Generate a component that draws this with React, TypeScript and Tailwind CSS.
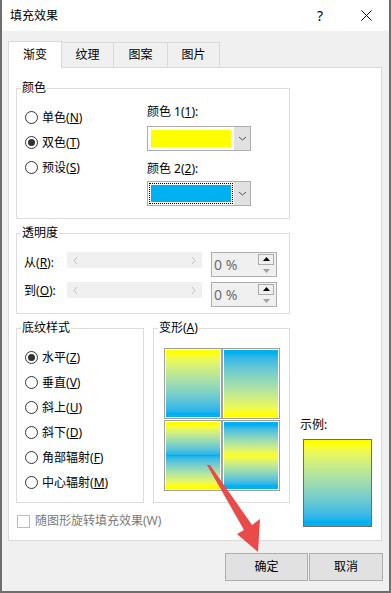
import React from "react";

const YELLOW = "#ffff00";
const BLUE = "#00b0f0";

function Radio({ label, hotkey, checked }: { label: string; hotkey: string; checked?: boolean }) {
  return (
    <div className="flex h-[25px] items-center gap-[4px]">
      <span className="flex h-[13px] w-[13px] items-center justify-center rounded-full border border-[#333333] bg-white">
        {checked && <span className="h-[7px] w-[7px] rounded-full bg-[#333333]" />}
      </span>
      <span>
        {label}(<u>{hotkey}</u>)
      </span>
    </div>
  );
}

function Group({ label, className, children }: { label: React.ReactNode; className: string; children?: React.ReactNode }) {
  return (
    <div className={"relative border border-[#dcdcdc] " + className}>
      <span className="absolute -top-[9px] left-[4px] bg-white px-[1px] leading-[16px]">{label}</span>
      {children}
    </div>
  );
}

function Chevron({ dir, color }: { dir: "down" | "left" | "right" | "up"; color: string }) {
  const d = {
    down: "M1 1 L4.5 4 L8 1",
    up: "M1 4 L4.5 1 L8 4",
    left: "M4 1 L1 4.5 L4 8",
    right: "M1 1 L4 4.5 L1 8",
  }[dir];
  const flat = dir === "down" || dir === "up";
  return (
    <svg viewBox={flat ? "0 0 9 5" : "0 0 5 9"} width={flat ? 9 : 5} height={flat ? 5 : 9}>
      <path d={d} fill="none" stroke={color} strokeWidth="1" />
    </svg>
  );
}

function Combo({ color, focused }: { color: string; focused?: boolean }) {
  return (
    <div className="flex h-[25px] w-[104px] border border-[#adadad] bg-white">
      <div className="flex-1 p-[1px]">
        <div className={"h-full w-full p-[1px] " + (focused ? "border border-dotted border-black" : "border border-transparent")}>
          <div className="h-full w-full" style={{ background: color }} />
        </div>
      </div>
      <div className="flex w-[16px] items-center justify-center bg-[#e1e1e1]">
        <Chevron dir="down" color="#555555" />
      </div>
    </div>
  );
}

function SliderRow({ label, hotkey, labelTop }: { label: string; hotkey: string; labelTop: string }) {
  return (
    <div className="flex h-[25px] items-start">
      <span className={"w-[43px] leading-[16px] " + labelTop}>
        {label}(<u>{hotkey}</u>):
      </span>
      <div className="flex h-[16px] w-[135px] items-center justify-between bg-[#f0f0f0] px-[6px]">
        <Chevron dir="left" color="#c2c2c2" />
        <Chevron dir="right" color="#c2c2c2" />
      </div>
      <div className="ml-[9px] flex h-[25px] w-[66px] items-center border border-[#adadad] bg-[#f0f0f0] pr-[2px]">
        <span className="flex-1 pl-[2px] text-[14px] text-[#6d6d6d]">0 %</span>
        <div className="flex flex-col gap-[1px]">
          <div className="flex h-[11px] w-[16px] items-center justify-center border border-[#adadad] bg-[#f0f0f0]">
            <svg width="7" height="4" viewBox="0 0 7 4"><path d="M0 4 L3.5 0 L7 4 Z" fill="#000" /></svg>
          </div>
          <div className="flex h-[10px] w-[16px] items-center justify-center bg-[#f0f0f0]">
            <svg width="7" height="4" viewBox="0 0 7 4"><path d="M0 0 L3.5 4 L7 0 Z" fill="#a0a0a0" /></svg>
          </div>
        </div>
      </div>
    </div>
  );
}

function Tile({ bg }: { bg: string }) {
  return (
    <div className="h-[71px] w-[58px] border border-[#a0a0a0] bg-white p-[1px]">
      <div className={"h-full w-full " + bg} />
    </div>
  );
}

export default function App() {
  return (
    <div className="relative h-[593px] w-[391px] overflow-hidden border-b-2 border-l-2 border-r-2 border-[#6e6e6e] bg-[#f0f0f0] font-['Noto_Sans','Noto_Sans_CJK_SC',sans-serif] text-[12px] text-black">
      {/* title bar */}
      <div className="flex h-[31px] items-center bg-white pl-[8px]">
        <span className="text-[12px]">填充效果</span>
        <span className="flex-1" />
        <span className="w-[46px] text-center text-[14px]">?</span>
        <span className="flex w-[46px] items-center justify-center">
          <svg width="11" height="11" viewBox="0 0 11 11">
            <path d="M0.5 0.5 L10.5 10.5 M10.5 0.5 L0.5 10.5" stroke="#111" strokeWidth="1" />
          </svg>
        </span>
      </div>

      {/* tabs */}
      <div className="mt-[10px] flex h-[26px] items-end pl-[6px]">
        <div className="relative z-10 -mb-px flex h-[27px] w-[54px] items-center justify-center border border-b-0 border-[#d9d9d9] bg-white pb-[1px]">
          渐变
        </div>
        <div className="flex h-[25px] w-[52px] items-center justify-center border border-b-0 border-l-0 border-[#d9d9d9]">纹理</div>
        <div className="flex h-[25px] w-[54px] items-center justify-center border border-b-0 border-l-0 border-[#d9d9d9]">图案</div>
        <div className="flex h-[25px] w-[52px] items-center justify-center border border-b-0 border-l-0 border-[#d9d9d9]">图片</div>
      </div>

      {/* panel */}
      <div className="ml-[6px] h-[474px] w-[374px] border border-[#d9d9d9] bg-white pl-[7px] pt-[20px]">
        <Group label="颜色" className="flex h-[131px] w-[274px]">
          <div className="w-[130px] pl-[8px] pt-[16px]">
            <Radio label="单色" hotkey="N" />
            <Radio label="双色" hotkey="T" checked />
            <Radio label="预设" hotkey="S" />
          </div>
          <div className="pt-[15px]">
            <div className="leading-[16px]">
              颜色 1(<u>1</u>):
            </div>
            <div className="mt-[6px]">
              <Combo color={YELLOW} />
            </div>
            <div className="mt-[10px] leading-[16px]">
              颜色 2(<u>2</u>):
            </div>
            <div className="mt-[4px]">
              <Combo color={BLUE} focused />
            </div>
          </div>
        </Group>

        <Group label="透明度" className="mt-[14px] flex h-[81px] w-[274px] flex-col gap-[5px] pl-[7px] pt-[18px]">
          <SliderRow label="从" hotkey="R" labelTop="mt-[3px]" />
          <SliderRow label="到" hotkey="O" labelTop="mt-[1px]" />
        </Group>

        <div className="mt-[14px] flex">
          <Group label="底纹样式" className="h-[175px] w-[128px] pl-[8px] pt-[16px]">
            <Radio label="水平" hotkey="Z" checked />
            <Radio label="垂直" hotkey="V" />
            <Radio label="斜上" hotkey="U" />
            <Radio label="斜下" hotkey="D" />
            <Radio label="角部辐射" hotkey="F" />
            <Radio label="中心辐射" hotkey="M" />
          </Group>
          <Group
            label={
              <>
                变形(<u>A</u>)
              </>
            }
            className="ml-[9px] h-[175px] w-[137px] pl-[10px] pt-[19px]"
          >
            <div className="grid w-[116px] grid-cols-2 gap-y-px">
              <Tile bg="bg-linear-to-b from-[#ffff00] from-5% to-[#00b0f0] to-95%" />
              <Tile bg="bg-linear-to-b from-[#00b0f0] from-5% to-[#ffff00] to-95%" />
              <Tile bg="bg-linear-to-b from-[#ffff00] from-5% via-[#00b0f0] to-[#ffff00] to-95%" />
              <Tile bg="bg-linear-to-b from-[#00b0f0] from-5% via-[#ffff00] to-[#00b0f0] to-95%" />
            </div>
          </Group>
          <div className="ml-[10px] pt-[89px]">
            <div className="leading-[16px]">示例:</div>
            <div className="ml-[3px] mt-[6px] h-[88px] w-[69px] border border-[#6d6d6d] bg-linear-to-b from-[#ffff00] from-5% to-[#00b0f0] to-95%" />
          </div>
        </div>

        <div className="-mt-[15px] flex items-center gap-[5px] pl-[1px]">
          <span className="h-[13px] w-[13px] border border-[#bcbcbc] bg-white" />
          <span className="text-[#7a7a7a]">随图形旋转填充效果(W)</span>
        </div>
      </div>

      {/* buttons */}
      <div className="mt-[12px] flex justify-end gap-[1px] pr-[6px]">
        <button className="h-[28px] w-[83px] border border-[#adadad] bg-[#e1e1e1]">确定</button>
        <button className="h-[28px] w-[74px] border border-[#adadad] bg-[#e1e1e1]">取消</button>
      </div>

      {/* red annotation arrow */}
      <svg className="pointer-events-none absolute left-0 top-0" width="391" height="593" viewBox="0 0 391 593">
        <polygon points="205,465 208,465 250,525 258,519 256,552 235,534 242,530" fill="#ea4a48" />
      </svg>
    </div>
  );
}
